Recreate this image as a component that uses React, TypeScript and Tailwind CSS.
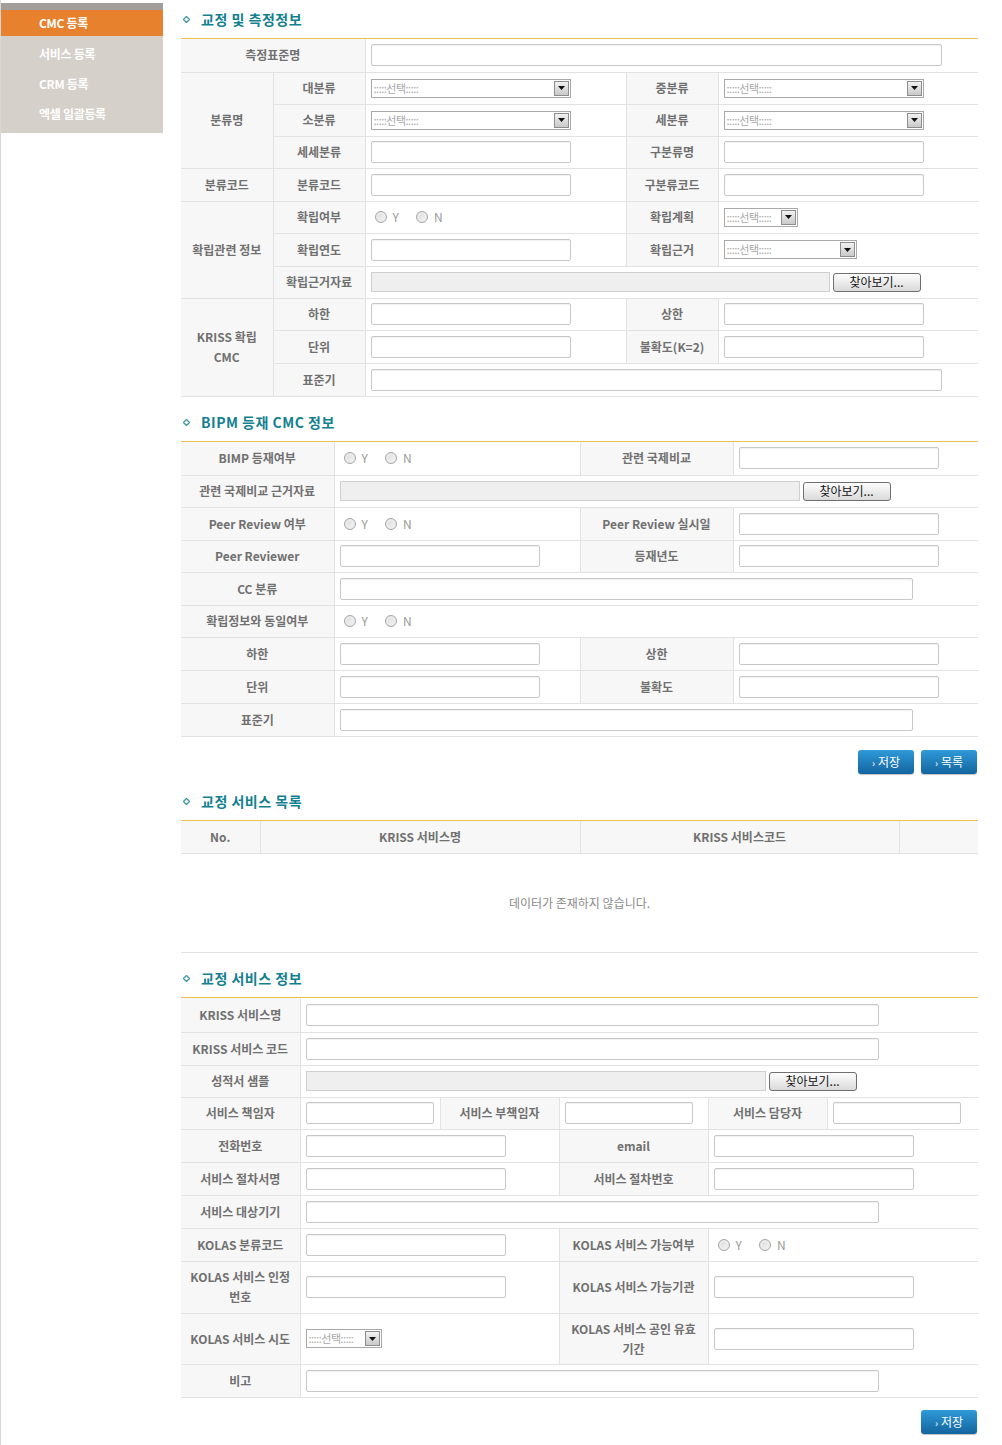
import React from 'react';

const cellBorder = 'border border-[#e2e2e2]';
const labelCls = `${cellBorder} bg-[#f7f7f7] text-center text-[12px] font-bold text-[#707070] leading-[20px]`;
const valueCls = `${cellBorder} bg-white pl-[5px] text-left`;

function Label({ children, rowSpan, colSpan }: { children: React.ReactNode; rowSpan?: number; colSpan?: number }) {
  return (
    <td rowSpan={rowSpan} colSpan={colSpan} className={labelCls}>
      {children}
    </td>
  );
}

function Value({ children, colSpan }: { children?: React.ReactNode; colSpan?: number }) {
  return (
    <td colSpan={colSpan} className={valueCls}>
      {children}
    </td>
  );
}

function TextBox({ w = 200 }: { w?: number }) {
  return (
    <input
      type="text"
      readOnly
      style={{ width: w }}
      className="block h-[22px] rounded-[2px] border border-[#c8c8c8] bg-white shadow-[inset_0_1px_1px_rgba(0,0,0,0.06)] outline-none"
    />
  );
}

function Select({ w = 200 }: { w?: number }) {
  return (
    <div style={{ width: w }} className="flex h-[19px] items-center border border-[#a9a9a9] bg-white">
      <span className="flex-1 pl-[2px] text-[11px] leading-none tracking-[-0.5px] text-[#a8a8a8]">:::::선택:::::</span>
      <span className="mr-px flex h-[15px] w-[15px] items-center justify-center border border-[#8d8d8d] bg-gradient-to-b from-[#f2f2f2] to-[#c9c9c9]">
        <svg width="7" height="4" viewBox="0 0 7 4">
          <polygon points="0,0 7,0 3.5,4" fill="#111" />
        </svg>
      </span>
    </div>
  );
}

function Radio({ label }: { label: string }) {
  return (
    <span className="mr-[17px] inline-flex items-center gap-[6px]">
      <span className="h-[12px] w-[12px] rounded-full border border-[#a6a6a6] bg-gradient-to-br from-[#d6d6d6] to-[#fafafa] shadow-[inset_0_0_0_2px_#ececec]" />
      <span className="text-[12px] text-[#999]">{label}</span>
    </span>
  );
}

function YesNo() {
  return (
    <div className="ml-[4px] flex items-center">
      <Radio label="Y" />
      <Radio label="N" />
    </div>
  );
}

function FileBox({ w = 459, btnW = 88 }: { w?: number; btnW?: number }) {
  return (
    <div className="flex items-center gap-[3px]">
      <div style={{ width: w }} className="h-[20px] border border-[#cfcfcf] bg-[#efefef]" />
      <button
        style={{ width: btnW }}
        className="h-[19px] rounded-[3px] border border-[#6f6f6f] bg-gradient-to-b from-[#fdfdfd] to-[#dadada] text-[12px] leading-none text-[#111]"
      >
        찾아보기...
      </button>
    </div>
  );
}

function SectionTitle({ children }: { children: React.ReactNode }) {
  return (
    <div className="flex h-[39px] items-center border-b border-[#edc150] pl-[2px]">
      <svg width="7" height="7" viewBox="0 0 7 7" className="mr-[11px]">
        <polygon points="3.5,0.5 6.5,3.5 3.5,6.5 0.5,3.5" fill="#fff" stroke="#3f98a5" strokeWidth="1.3" />
      </svg>
      <span className="text-[14px] font-bold tracking-[0.5px] text-[#13808f]">{children}</span>
    </div>
  );
}

function BlueButton({ children }: { children: React.ReactNode }) {
  return (
    <button className="flex h-[24px] w-[56px] items-center justify-center gap-[3px] rounded-[3px] bg-gradient-to-b from-[#2f9ad9] to-[#13659f] text-[12px] text-white shadow-[0_1px_1px_rgba(0,0,0,0.25)]">
      <span className="text-[10px]">›</span>
      {children}
    </button>
  );
}

function Sidebar() {
  const items = ['서비스 등록', 'CRM 등록', '엑셀 일괄등록'];
  return (
    <div className="w-[162px] shrink-0 pt-[3px]">
      <div className="h-[7px] bg-[#a29f9b]" />
      <div className="flex h-[26px] items-center bg-[#e8812e] pl-[38px] text-[12px] font-bold tracking-[-0.3px] text-white">CMC 등록</div>
      <div className="bg-[#d5d0c9] pb-[4px] pt-[3px]">
        {items.map((t) => (
          <div key={t} className="flex h-[30px] items-center pl-[38px] text-[12px] font-bold tracking-[-0.3px] text-white">
            {t}
          </div>
        ))}
      </div>
    </div>
  );
}

function MeasureTable() {
  return (
    <table className="w-[797px] table-fixed border-collapse border-hidden">
      <colgroup>
        <col className="w-[92px]" />
        <col className="w-[92px]" />
        <col className="w-[261px]" />
        <col className="w-[92px]" />
        <col className="w-[260px]" />
      </colgroup>
      <tbody>
        <tr className="h-[33px]">
          <Label colSpan={2}>측정표준명</Label>
          <Value colSpan={3}>
            <TextBox w={571} />
          </Value>
        </tr>
        <tr className="h-[32px]">
          <Label rowSpan={3}>분류명</Label>
          <Label>대분류</Label>
          <Value>
            <Select />
          </Value>
          <Label>중분류</Label>
          <Value>
            <Select />
          </Value>
        </tr>
        <tr className="h-[32px]">
          <Label>소분류</Label>
          <Value>
            <Select />
          </Value>
          <Label>세분류</Label>
          <Value>
            <Select />
          </Value>
        </tr>
        <tr className="h-[32px]">
          <Label>세세분류</Label>
          <Value>
            <TextBox />
          </Value>
          <Label>구분류명</Label>
          <Value>
            <TextBox />
          </Value>
        </tr>
        <tr className="h-[33px]">
          <Label>분류코드</Label>
          <Label>분류코드</Label>
          <Value>
            <TextBox />
          </Value>
          <Label>구분류코드</Label>
          <Value>
            <TextBox />
          </Value>
        </tr>
        <tr className="h-[32px]">
          <Label rowSpan={3}>확립관련 정보</Label>
          <Label>확립여부</Label>
          <Value>
            <YesNo />
          </Value>
          <Label>확립계획</Label>
          <Value>
            <Select w={74} />
          </Value>
        </tr>
        <tr className="h-[33px]">
          <Label>확립연도</Label>
          <Value>
            <TextBox />
          </Value>
          <Label>확립근거</Label>
          <Value>
            <Select w={133} />
          </Value>
        </tr>
        <tr className="h-[32px]">
          <Label>확립근거자료</Label>
          <Value colSpan={3}>
            <FileBox />
          </Value>
        </tr>
        <tr className="h-[32px]">
          <Label rowSpan={3}>
            KRISS 확립
            <br />
            CMC
          </Label>
          <Label>하한</Label>
          <Value>
            <TextBox />
          </Value>
          <Label>상한</Label>
          <Value>
            <TextBox />
          </Value>
        </tr>
        <tr className="h-[33px]">
          <Label>단위</Label>
          <Value>
            <TextBox />
          </Value>
          <Label>불확도(K=2)</Label>
          <Value>
            <TextBox />
          </Value>
        </tr>
        <tr className="h-[33px]">
          <Label>표준기</Label>
          <Value colSpan={3}>
            <TextBox w={571} />
          </Value>
        </tr>
      </tbody>
    </table>
  );
}

function BipmTable() {
  return (
    <table className="w-[797px] table-fixed border-collapse border-hidden">
      <colgroup>
        <col className="w-[153px]" />
        <col className="w-[246px]" />
        <col className="w-[153px]" />
        <col className="w-[245px]" />
      </colgroup>
      <tbody>
        <tr className="h-[33px]">
          <Label>BIMP 등재여부</Label>
          <Value>
            <YesNo />
          </Value>
          <Label>관련 국제비교</Label>
          <Value>
            <TextBox />
          </Value>
        </tr>
        <tr className="h-[32px]">
          <Label>관련 국제비교 근거자료</Label>
          <Value colSpan={3}>
            <FileBox w={460} />
          </Value>
        </tr>
        <tr className="h-[33px]">
          <Label>Peer Review 여부</Label>
          <Value>
            <YesNo />
          </Value>
          <Label>Peer Review 실시일</Label>
          <Value>
            <TextBox />
          </Value>
        </tr>
        <tr className="h-[32px]">
          <Label>Peer Reviewer</Label>
          <Value>
            <TextBox />
          </Value>
          <Label>등재년도</Label>
          <Value>
            <TextBox />
          </Value>
        </tr>
        <tr className="h-[33px]">
          <Label>CC 분류</Label>
          <Value colSpan={3}>
            <TextBox w={573} />
          </Value>
        </tr>
        <tr className="h-[32px]">
          <Label>확립정보와 동일여부</Label>
          <Value colSpan={3}>
            <YesNo />
          </Value>
        </tr>
        <tr className="h-[33px]">
          <Label>하한</Label>
          <Value>
            <TextBox />
          </Value>
          <Label>상한</Label>
          <Value>
            <TextBox />
          </Value>
        </tr>
        <tr className="h-[33px]">
          <Label>단위</Label>
          <Value>
            <TextBox />
          </Value>
          <Label>불확도</Label>
          <Value>
            <TextBox />
          </Value>
        </tr>
        <tr className="h-[33px]">
          <Label>표준기</Label>
          <Value colSpan={3}>
            <TextBox w={573} />
          </Value>
        </tr>
      </tbody>
    </table>
  );
}

function ServiceList() {
  return (
    <div className="border-b border-[#e2e2e2]">
      <table className="w-[797px] table-fixed border-collapse border-hidden">
        <colgroup>
          <col className="w-[79px]" />
          <col className="w-[320px]" />
          <col className="w-[319px]" />
          <col className="w-[79px]" />
        </colgroup>
        <tbody>
          <tr className="h-[32px]">
            <Label>No.</Label>
            <Label>KRISS 서비스명</Label>
            <Label>KRISS 서비스코드</Label>
            <Label>{''}</Label>
          </tr>
        </tbody>
      </table>
      <div className="flex h-[99px] items-center justify-center border-t border-[#e2e2e2] text-[12px] text-[#8a8a8a]">
        데이터가 존재하지 않습니다.
      </div>
    </div>
  );
}

function ServiceInfoTable() {
  return (
    <table className="w-[797px] table-fixed border-collapse border-hidden">
      <colgroup>
        <col className="w-[119px]" />
        <col className="w-[140px]" />
        <col className="w-[119px]" />
        <col className="w-[149px]" />
        <col className="w-[119px]" />
        <col className="w-[151px]" />
      </colgroup>
      <tbody>
        <tr className="h-[34px]">
          <Label>KRISS 서비스명</Label>
          <Value colSpan={5}>
            <TextBox w={573} />
          </Value>
        </tr>
        <tr className="h-[33px]">
          <Label>KRISS 서비스 코드</Label>
          <Value colSpan={5}>
            <TextBox w={573} />
          </Value>
        </tr>
        <tr className="h-[32px]">
          <Label>성적서 샘플</Label>
          <Value colSpan={5}>
            <FileBox w={460} />
          </Value>
        </tr>
        <tr className="h-[32px]">
          <Label>서비스 책임자</Label>
          <Value>
            <TextBox w={128} />
          </Value>
          <Label>서비스 부책임자</Label>
          <Value>
            <TextBox w={128} />
          </Value>
          <Label>서비스 담당자</Label>
          <Value>
            <TextBox w={128} />
          </Value>
        </tr>
        <tr className="h-[33px]">
          <Label>전화번호</Label>
          <Value colSpan={2}>
            <TextBox />
          </Value>
          <Label>email</Label>
          <Value colSpan={2}>
            <TextBox />
          </Value>
        </tr>
        <tr className="h-[33px]">
          <Label>서비스 절차서명</Label>
          <Value colSpan={2}>
            <TextBox />
          </Value>
          <Label>서비스 절차번호</Label>
          <Value colSpan={2}>
            <TextBox />
          </Value>
        </tr>
        <tr className="h-[33px]">
          <Label>서비스 대상기기</Label>
          <Value colSpan={5}>
            <TextBox w={573} />
          </Value>
        </tr>
        <tr className="h-[33px]">
          <Label>KOLAS 분류코드</Label>
          <Value colSpan={2}>
            <TextBox />
          </Value>
          <Label>KOLAS 서비스 가능여부</Label>
          <Value colSpan={2}>
            <YesNo />
          </Value>
        </tr>
        <tr className="h-[52px]">
          <Label>
            KOLAS 서비스 인정
            <br />
            번호
          </Label>
          <Value colSpan={2}>
            <TextBox />
          </Value>
          <Label>KOLAS 서비스 가능기관</Label>
          <Value colSpan={2}>
            <TextBox />
          </Value>
        </tr>
        <tr className="h-[51px]">
          <Label>KOLAS 서비스 시도</Label>
          <Value colSpan={2}>
            <Select w={76} />
          </Value>
          <Label>
            KOLAS 서비스 공인 유효
            <br />
            기간
          </Label>
          <Value colSpan={2}>
            <TextBox />
          </Value>
        </tr>
        <tr className="h-[33px]">
          <Label>비고</Label>
          <Value colSpan={5}>
            <TextBox w={573} />
          </Value>
        </tr>
      </tbody>
    </table>
  );
}

export default function App() {
  return (
    <div className="min-h-[1445px] w-[1002px] border-l border-[#d8d8d8] bg-white font-['Noto_Sans_CJK_KR','Noto_Sans',sans-serif]">
      <div className="flex">
        <Sidebar />
        <main className="ml-[18px] w-[797px]">
          <SectionTitle>교정 및 측정정보</SectionTitle>
          <div className="border-b border-[#e2e2e2]">
            <MeasureTable />
          </div>

          <div className="mt-[6px]">
            <SectionTitle>BIPM 등재 CMC 정보</SectionTitle>
            <div className="border-b border-[#e2e2e2]">
              <BipmTable />
            </div>
          </div>
          <div className="mt-[13px] flex justify-end gap-[7px] pr-px">
            <BlueButton>저장</BlueButton>
            <BlueButton>목록</BlueButton>
          </div>

          <div className="mt-[8px]">
            <SectionTitle>교정 서비스 목록</SectionTitle>
            <ServiceList />
          </div>

          <div className="mt-[6px]">
            <SectionTitle>교정 서비스 정보</SectionTitle>
            <div className="border-b border-[#e2e2e2]">
              <ServiceInfoTable />
            </div>
          </div>
          <div className="mt-[12px] flex justify-end pr-px">
            <BlueButton>저장</BlueButton>
          </div>
        </main>
      </div>
    </div>
  );
}
